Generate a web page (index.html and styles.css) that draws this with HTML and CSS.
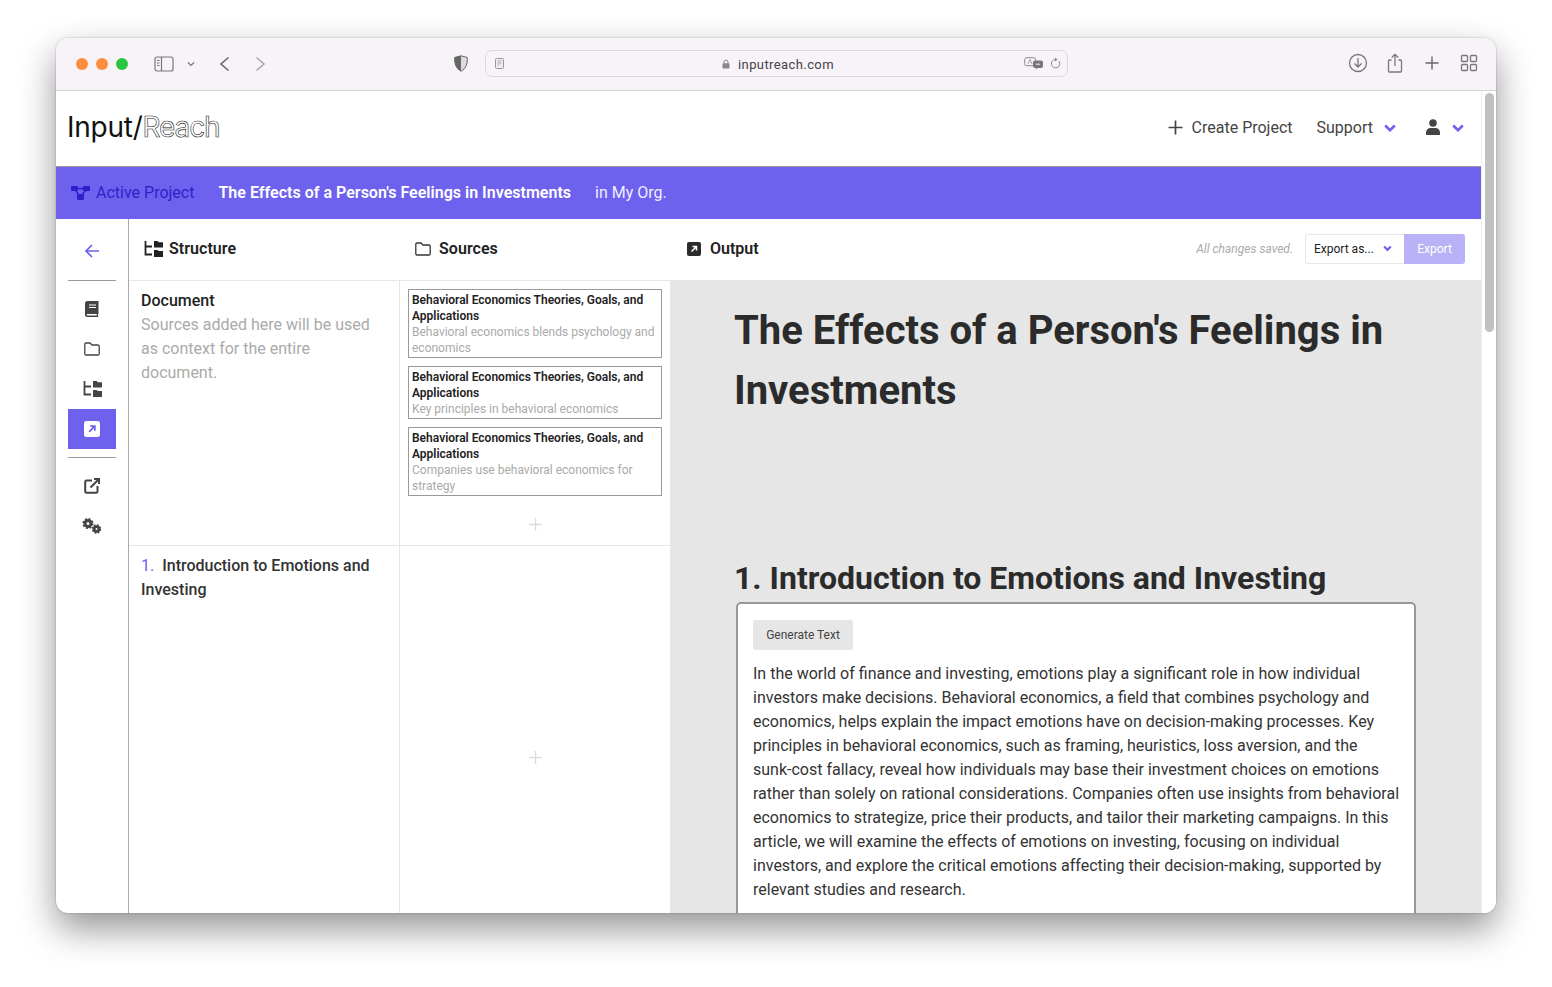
FILE: index.html
```html
<!DOCTYPE html>
<html lang="en">
<head>
<meta charset="utf-8">
<title>Input/Reach</title>
<link rel="stylesheet" href="styles.css">
</head>
<body>
<div class="window">
  <div class="toolbar">
    <div class="lights"><i class="light orange"></i><i class="light orange"></i><i class="light green"></i></div>
    <svg class="tb sidebar-ico" viewBox="0 0 20 16"><rect x="1" y="1" width="18" height="14" rx="2" fill="none" stroke="#777" stroke-width="1.2"/><path d="M7.5 1v14" stroke="#777" stroke-width="1.2"/><path d="M3 4.5h2.5M3 7h2.5M3 9.500h2.500" stroke="#777"/></svg>
    <svg class="tb chev-ico" viewBox="0 0 8 6"><path d="M1 1.500l3 3 3-3" fill="none" stroke="#777" stroke-width="1.200"/></svg>
    <svg class="tb back-ico" viewBox="0 0 11 16"><path d="M9.500 1.500L2 8l7.500 6.500" fill="none" stroke="#666" stroke-width="1.600"/></svg>
    <svg class="tb fwd-ico" viewBox="0 0 11 16"><path d="M1.500 1.500L9 8l-7.500 6.500" fill="none" stroke="#aaa" stroke-width="1.600"/></svg>
    <svg class="tb shield-ico" viewBox="0 0 14 17"><path d="M7 .8L13.300 2.500C13.500 9 12 13.500 7 16.200 2 13.500.5 9 .7 2.500z" fill="#ddd" stroke="#666" stroke-width="1"/><path d="M7 .8L.7 2.500C.5 9 2 13.500 7 16.200z" fill="#666"/></svg>
    <div class="address">
      <svg class="page-ico" viewBox="0 0 9 11"><rect x=".5" y=".5" width="8" height="10" rx="1" fill="#eee" stroke="#999"/><path d="M2.500 3h4M2.500 5h4M2.500 7h2" stroke="#999" stroke-width=".8"/></svg>
      <div class="url"><svg class="lock-ico" viewBox="0 0 8 10"><path d="M2 4.500V3a2 2 0 014 0v1.500" fill="none" stroke="#888"/><rect x=".5" y="4.300" width="7" height="5.200" rx="1" fill="#888"/></svg><span>inputreach.com</span></div>
      <svg class="translate-ico" viewBox="0 0 20 13"><rect x=".7" y=".7" width="11" height="8" rx="2" fill="#f7f3f9" stroke="#888"/><path d="M4 7l2-4.500L8 7" fill="none" stroke="#888" stroke-width=".8"/><rect x="9" y="3.500" width="10" height="7.500" rx="2" fill="#777"/><path d="M11 12.500l2-2h2z" fill="#777"/><path d="M12 7.200h4" stroke="#f7f3f9"/></svg>
      <svg class="reload-ico" viewBox="0 0 11 12"><path d="M8.800 4A4.200 4.200 0 1 1 5.500 2.500" fill="none" stroke="#888"/><path d="M5 .5l2.500 2L5 4.500z" fill="#888"/></svg>
    </div>
    <div class="tb-right">
      <svg class="tb-r" viewBox="0 0 20 20"><circle cx="10" cy="10" r="8.500" fill="none" stroke="#777" stroke-width="1.300"/><path d="M10 5v9M6.500 10.500L10 14l3.500-3.500" fill="none" stroke="#777" stroke-width="1.300"/></svg>
      <svg class="tb-r" viewBox="0 0 20 20"><path d="M6.500 7H4.500a1 1 0 00-1 1v10a1 1 0 001 1h11a1 1 0 001-1V8a1 1 0 00-1-1h-2" fill="none" stroke="#777" stroke-width="1.300"/><path d="M10 13V1.500M6.800 4.500L10 1.300l3.200 3.200" fill="none" stroke="#777" stroke-width="1.300"/></svg>
      <svg class="tb-r" viewBox="0 0 20 20"><path d="M10 3.500v13M3.500 10h13" stroke="#666" stroke-width="1.400"/></svg>
      <svg class="tb-r" viewBox="0 0 20 20"><g fill="none" stroke="#777" stroke-width="1.300"><rect x="2.500" y="2.500" width="6" height="6" rx="1"/><rect x="11.500" y="2.500" width="6" height="6" rx="1"/><rect x="2.500" y="11.500" width="6" height="6" rx="1"/><rect x="11.500" y="11.500" width="6" height="6" rx="1"/></g></svg>
    </div>
  </div>

  <div class="viewport">
    <div class="page">
      <header class="header">
        <div class="logo">Input/<span class="logo-out">Reach</span></div>
        <nav class="nav">
          <svg class="nav-plus" viewBox="0 0 14 14"><path d="M7 .5v13M.5 7h13" stroke="#444" stroke-width="1.600"/></svg>
          <span class="nav-create">Create Project</span>
          <span class="nav-support">Support</span>
          <svg class="nav-chev" viewBox="0 0 12 8"><path d="M1.200 1.500L6 6.200l4.800-4.700" fill="none" stroke="#6e61ee" stroke-width="2.600"/></svg>
          <svg class="nav-user" viewBox="0 0 14 16"><circle cx="7" cy="4" r="3.800" fill="#444"/><path d="M0 16v-2.500C0 11 2 9 4.500 9h5C12 9 14 11 14 13.500V16z" fill="#444"/></svg>
          <svg class="nav-chev chev-user" viewBox="0 0 12 8"><path d="M1.200 1.500L6 6.200l4.800-4.700" fill="none" stroke="#6e61ee" stroke-width="2.600"/></svg>
        </nav>
      </header>

      <div class="banner">
        <svg class="banner-ico" viewBox="0 0 19 15"><g fill="#2f1fc9"><rect x="0" y="1" width="7" height="5" rx="1"/><rect x="12" y="1" width="7" height="5" rx="1"/><rect x="6" y="9" width="7" height="6" rx="1"/></g><path d="M5 3.500h9M4 5l5 6M15 5l-5 6" stroke="#2f1fc9" stroke-width="1.300"/></svg>
        <span class="banner-label">Active Project</span>
        <span class="banner-title">The Effects of a Person's Feelings in Investments</span>
        <span class="banner-org">in My Org.</span>
      </div>

      <div class="app">
        <aside class="rail">
          <div class="rail-back"><svg class="rail-ico" viewBox="0 0 16 16"><path d="M15 8H2M8 2L2 8l6 6" fill="none" stroke="#6e61ee" stroke-width="1.700"/></svg></div>
          <div class="rail-rule"></div>
          <div class="rail-item"><svg class="rail-ico" viewBox="0 0 16 16"><path d="M3.500 0h10.300a.7.700 0 01.700.700V12.500a.700.700 0 01-.5.700V15h.3v1H3.500A2.500 2.500 0 011 13.500v-11A2.500 2.500 0 013.500 0z" fill="#444"/><path d="M5 4h7M5 6.500h7" stroke="#fff" stroke-width="1.200"/><path d="M3.500 13h9.300v1.600H3.500a.8.800 0 010-1.600z" fill="#fff"/></svg></div>
          <div class="rail-item"><svg class="rail-ico" viewBox="0 0 16 16"><path d="M2 2h4l2 2h6a1.200 1.200 0 011.200 1.200v7.600A1.200 1.200 0 0114 14H2A1.200 1.200 0 01.800 12.800V3.200A1.200 1.200 0 012 2z" fill="none" stroke="#444" stroke-width="1.300"/></svg></div>
          <div class="rail-item"><svg class="rail-ico struct" viewBox="0 0 19 16"><use href="#structure"/></svg></div>
          <div class="rail-item active"><svg class="rail-ico" viewBox="0 0 14 14"><rect width="14" height="14" rx="2" fill="#fff"/><path d="M4.500 9.500l5-5M5.500 4.500h4v4" fill="none" stroke="#6e61ee" stroke-width="1.500"/></svg></div>
          <div class="rail-rule rule-mid"></div>
          <div class="rail-item"><svg class="rail-ico" viewBox="0 0 16 16"><path d="M8 2.500H2.500a1.300 1.300 0 00-1.300 1.300v9.700a1.300 1.300 0 001.300 1.300h9.700a1.300 1.300 0 001.300-1.300V8" fill="none" stroke="#444" stroke-width="2"/><path d="M6.500 9.500L15 1M10 .9h5.100V6" fill="none" stroke="#444" stroke-width="2"/></svg></div>
          <div class="rail-item"><svg class="rail-ico gears" viewBox="0 0 20 16"><circle cx="6" cy="5.500" r="3" fill="none" stroke="#444" stroke-width="3"/><circle cx="6" cy="5.500" r="4.800" fill="none" stroke="#444" stroke-width="1.500" stroke-dasharray="2 1.770"/><circle cx="14.500" cy="11" r="2.400" fill="none" stroke="#444" stroke-width="2.800"/><circle cx="14.500" cy="11" r="4" fill="none" stroke="#444" stroke-width="1.400" stroke-dasharray="1.800 1.340"/></svg></div>
        </aside>

        <div class="work">
          <div class="bar">
            <div class="bar-col"><svg class="bar-ico struct" viewBox="0 0 19 16"><use href="#structure"/></svg><span>Structure</span></div>
            <div class="bar-col"><svg class="bar-ico" viewBox="0 0 16 16"><path d="M2 2h4l2 2h6a1.200 1.200 0 011.200 1.200v7.600A1.200 1.200 0 0114 14H2A1.200 1.200 0 01.800 12.800V3.200A1.200 1.200 0 012 2z" fill="none" stroke="#333" stroke-width="1.300"/></svg><span>Sources</span></div>
            <div class="bar-out">
              <svg class="out-ico" viewBox="0 0 14 14"><rect width="14" height="14" rx="2" fill="#2b2b2b"/><path d="M4.500 9.500l5-5M5.500 4.500h4v4" fill="none" stroke="#fff" stroke-width="1.500"/></svg>
              <span class="out-label">Output</span>
              <span class="saved">All changes saved.</span>
              <div class="select"><span>Export as...</span><svg class="sel-chev" viewBox="0 0 10 7"><path d="M1.300 1.300L5 5l3.700-3.700" fill="none" stroke="#6e61ee" stroke-width="2.400"/></svg></div>
              <div class="export">Export</div>
            </div>
          </div>

          <div class="content">
            <div class="outline">
              <section class="row row-doc">
                <div class="cell-title">
                  <h3 class="doc-title">Document</h3>
                  <p class="doc-hint">Sources added here will be used as context for the entire document.</p>
                </div>
                <div class="cell-src">
                  <div class="card"><b>Behavioral Economics Theories, Goals, and Applications</b><span>Behavioral economics blends psychology and economics</span></div>
                  <div class="card"><b>Behavioral Economics Theories, Goals, and Applications</b><span>Key principles in behavioral economics</span></div>
                  <div class="card"><b>Behavioral Economics Theories, Goals, and Applications</b><span>Companies use behavioral economics for strategy</span></div>
                  <div class="add add-doc"><svg class="plus-ico" viewBox="0 0 13 13"><path d="M6.500 0v13M0 6.500h13" stroke="#ddd" stroke-width="1.400"/></svg></div>
                </div>
              </section>
              <section class="row row-sec">
                <div class="cell-title">
                  <h3 class="sec-title"><span class="sec-num">1.</span>Introduction to Emotions and Investing</h3>
                </div>
                <div class="cell-src cell-center">
                  <div class="add"><svg class="plus-ico" viewBox="0 0 13 13"><path d="M6.500 0v13M0 6.500h13" stroke="#ddd" stroke-width="1.400"/></svg></div>
                </div>
              </section>
            </div>
            <main class="output">
              <h1 class="doc-h1">The Effects of a Person's Feelings in Investments</h1>
              <h2 class="doc-h2">1. Introduction to Emotions and Investing</h2>
              <div class="editor">
                <button class="gen">Generate Text</button>
                <p class="editor-text">In the world of finance and investing, emotions play a significant role in how individual investors make decisions. Behavioral economics, a field that combines psychology and economics, helps explain the impact emotions have on decision-making processes. Key principles in behavioral economics, such as framing, heuristics, loss aversion, and the sunk-cost fallacy, reveal how individuals may base their investment choices on emotions rather than solely on rational considerations. Companies often use insights from behavioral economics to strategize, price their products, and tailor their marketing campaigns. In this article, we will examine the effects of emotions on investing, focusing on individual investors, and explore the critical emotions affecting their decision-making, supported by relevant studies and research.</p>
              </div>
            </main>
          </div>
        </div>
      </div>
    </div>
    <div class="scrollbar"><div class="thumb"></div></div>
  </div>
</div>
<svg class="defs" width="0" height="0"><defs><symbol id="structure" viewBox="0 0 19 16"><path d="M1.500 0v13.500H8M1.500 5.500H8" fill="none" stroke="currentColor" stroke-width="1.800"/><path d="M10 0h3.500l1.300 1.300H19v5.200H10zM10 9h3.500l1.300 1H19v6H10z" fill="currentColor"/></symbol></defs></svg>
</body>
</html>
```
FILE: styles.css
```css
* { box-sizing: border-box; }
html, body { margin: 0; height: 987px; overflow: hidden; background: #fff; }
body { padding: 38px 56px 0; font-family: Roboto, "Liberation Sans", sans-serif; color: #222; }
.defs { position: absolute; }

.window { width: 1440px; height: 875px; border-radius: 12px; overflow: hidden; background: #fff; box-shadow: 0 16px 36px rgba(0,0,0,.42), 0 0 2px rgba(0,0,0,.3); display: flex; flex-direction: column; }

/* Browser toolbar */
.toolbar { height: 53px; flex: none; background: #f7f3f9; border-bottom: 1px solid #d6d3d8; display: flex; align-items: center; padding: 0 0 0 20px; }
.lights { display: flex; gap: 8px; }
.light { width: 12px; height: 12px; border-radius: 50%; display: block; }
.orange { background: #fc8c3f; }
.green { background: #29c63f; }
.tb { display: block; flex: none; margin-bottom: 1px; }
.sidebar-ico { width: 20px; height: 16px; margin-left: 26px; }
.chev-ico { width: 8px; height: 6px; margin-left: 13px; }
.back-ico { width: 11px; height: 16px; margin-left: 24px; }
.fwd-ico { width: 11px; height: 16px; margin-left: 25px; }
.shield-ico { width: 14px; height: 17px; margin-left: 188px; }
.address { width: 583px; height: 27px; margin-left: 17px; margin-bottom: 2px; border: 1px solid #dcd9de; border-radius: 7px; display: flex; align-items: center; padding: 0 6px 0 9px; font-size: 13px; color: #444; }
.page-ico { width: 9px; height: 11px; flex: none; }
.url { flex: 1; display: flex; justify-content: center; align-items: center; gap: 8px; letter-spacing: .4px; padding-left: 28px; padding-top: 2px; }
.lock-ico { width: 8px; height: 10px; }
.translate-ico { width: 20px; height: 13px; flex: none; }
.reload-ico { width: 11px; height: 12px; flex: none; margin-left: 6px; }
.tb-right { margin-left: auto; margin-bottom: 2px; display: flex; gap: 17px; padding-right: 17px; }
.tb-r { width: 20px; height: 20px; display: block; }

/* Page */
.viewport { flex: 1; min-height: 0; display: flex; }
.page { flex: 1; min-width: 0; display: flex; flex-direction: column; }
.scrollbar { width: 15px; flex: none; background: #fff; border-left: 1px solid #eee; padding: 2px 3px 0 3px; }
.thumb { width: 9px; height: 239px; border-radius: 5px; background: #c1c1c1; }

.header { height: 76px; flex: none; border-bottom: 1px solid #999; display: flex; align-items: center; padding: 0 17px 3px 11px; }
.logo { font-family: Inter, sans-serif; font-size: 28px; line-height: 34px; color: #111; letter-spacing: -.25px; }
.logo-out { color: #fff; -webkit-text-stroke: .6px #222; letter-spacing: -1.1px; }
.nav { margin-left: auto; display: flex; align-items: center; font-size: 16px; color: #444; }
.nav-plus { width: 15px; height: 15px; }
.nav-create { margin-left: 9px; }
.nav-support { margin-left: 24px; }
.nav-chev { width: 12px; height: 8px; margin-left: 11px; margin-top: 2px; }
.nav-user { width: 14px; height: 16px; margin-left: 30px; }
.chev-user { margin-left: 12px; }

.banner { height: 52px; flex: none; background: #6e61ee; display: flex; align-items: center; padding: 0 0 2px 15px; font-size: 16px; color: #fff; }
.banner-ico { width: 19px; height: 15px; }
.banner-label { margin-left: 6px; color: #2f1fc9; }
.banner-title { margin-left: 24px; font-weight: 600; letter-spacing: .02px; }
.banner-org { margin-left: 24px; color: #f0eeff; }

.app { flex: 1; min-height: 0; display: flex; }
.rail { width: 73px; flex: none; border-right: 1px solid #aaa; padding: 0 12px; }
.rail-back { height: 61px; display: flex; align-items: center; justify-content: center; padding-top: 3px; }
.rail-rule { height: 1px; background: #999; margin-bottom: 8px; }
.rule-mid { margin: 8px 0; }
.rail-item { height: 40px; display: flex; align-items: center; justify-content: center; }
.rail-item.active { background: #6e61ee; }
.rail-ico { width: 16px; height: 16px; display: block; }
.rail-ico.struct { width: 19px; height: 16px; color: #444; }
.rail-ico.gears { width: 20px; height: 16px; }

.work { flex: 1; min-width: 0; display: flex; flex-direction: column; }
.bar { height: 62px; flex: none; display: flex; align-items: center; border-bottom: 1px solid #e6e6e6; font-size: 16px; font-weight: 600; color: #222; padding-bottom: 2px; }
.bar-col { width: 271px; padding-left: 15px; display: flex; align-items: center; gap: 6px; letter-spacing: .05px; }
.bar-ico { width: 16px; height: 16px; display: block; margin-right: 2px; }
.bar-ico.struct { width: 19px; height: 16px; color: #222; margin-right: 0; }
.bar-out { flex: 1; display: flex; align-items: center; padding: 0 16px 0 16px; }
.out-ico { width: 14px; height: 14px; }
.out-label { margin-left: 9px; }
.saved { margin-left: auto; font-size: 12px; font-weight: 400; font-style: italic; color: #aaa; }
.select { width: 99px; height: 30px; margin-left: 12px; border: 1px solid #e6e6e6; border-right: 0; border-radius: 3px 0 0 3px; display: flex; align-items: center; padding-left: 8px; font-size: 12px; font-weight: 400; color: #222; }
.sel-chev { width: 9px; height: 7px; margin-left: 9px; }
.export { width: 61px; height: 30px; background: #b9b2f6; border-radius: 0 3px 3px 0; color: #fff; font-size: 12px; font-weight: 400; display: flex; align-items: center; justify-content: center; }

.content { flex: 1; min-height: 0; display: flex; }
.outline { width: 541px; flex: none; display: flex; flex-direction: column; }
.row { display: flex; }
.row-doc { height: 265px; flex: none; border-bottom: 1px solid #e6e6e6; }
.row-sec { flex: 1; }
.cell-title { width: 271px; flex: none; border-right: 1px solid #e6e6e6; padding: 8px 12px; }
.doc-title { margin: 0; font-size: 16px; line-height: 24px; font-weight: 500; color: #222; }
.doc-hint { margin: 0; font-size: 16px; line-height: 24px; color: #aaa; }
.sec-title { margin: 0; font-size: 16px; line-height: 24px; font-weight: 500; color: #333; }
.sec-num { color: #6e61ee; font-weight: 400; margin-right: 8px; }
.cell-src { flex: 1; min-width: 0; padding: 8px 8px 0; display: flex; flex-direction: column; gap: 8px; }
.cell-center { justify-content: center; padding-top: 56px; padding-bottom: 0; }
.card { border: 1px solid #999; padding: 2px 4px 1px 3px; font-size: 12px; line-height: 16px; background: #fff; }
.card b { display: block; font-weight: 600; color: #222; }
.card span { display: block; color: #aaa; }
.add { display: flex; justify-content: center; }
.add-doc { margin-top: 14px; }
.plus-ico { width: 13px; height: 13px; display: block; }

.output { flex: 1; min-width: 0; background: #e6e6e6; padding: 20px 64px 0 64px; overflow: hidden; }
.doc-h1 { margin: 0; font-size: 40px; line-height: 60px; font-weight: 700; color: #2b2b2b; width: 700px; }
.doc-h2 { margin: 133px 0 0; font-size: 32px; line-height: 48px; font-weight: 700; color: #2b2b2b; white-space: nowrap; }
.editor { width: 680px; margin: 0 0 0 2px; background: #fff; border: 2px solid #999; border-radius: 5px; padding: 16px 14.5px 15px 15px; }
.gen { display: block; width: 100px; height: 30px; border: 0; border-radius: 2px; background: #e6e6e6; color: #444; font: 400 12px Roboto, sans-serif; padding: 0; }
.editor-text { margin: 12px 0 0; font-size: 16px; line-height: 24px; color: #333; }
```
